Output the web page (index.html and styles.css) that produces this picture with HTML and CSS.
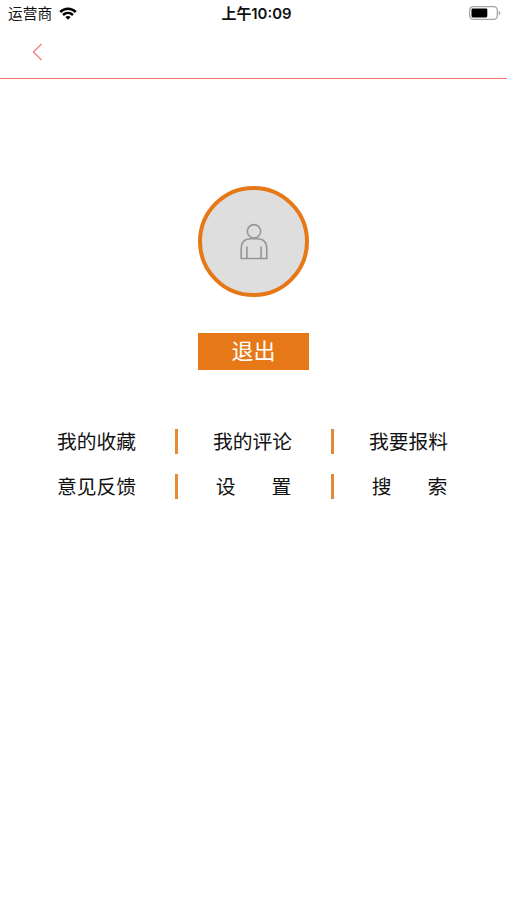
FILE: index.html
```html
<!DOCTYPE html>
<html lang="zh-CN">
<head>
<meta charset="utf-8">
<meta name="viewport" content="width=device-width, initial-scale=1">
<title>我的</title>
<link rel="stylesheet" href="styles.css">
</head>
<body>
<div class="status">
  <div class="carrier"><span>运营商</span>
    <svg class="wifi" width="18" height="13" viewBox="0 0 18 13" fill="none" stroke="#000" stroke-width="2.5"><path d="M1.2 5C5.7.7 12.3.7 16.8 5M4 8C6.9 5.3 11.1 5.3 14 8"/><path d="M9 12.8 6.3 10.1Q9 7.9 11.7 10.1Z" fill="#000" stroke="none"/></svg>
  </div>
  <time class="clock">上午10:09</time>
  <svg class="battery" width="32" height="14" viewBox="0 0 32 14"><rect x=".7" y=".7" width="27.6" height="12.6" rx="3.6" fill="#fff" stroke="#a6a6a6" stroke-width="1.3"/><rect x="2.5" y="2.5" width="15.8" height="9" rx="1.4"/><path d="M29.7 4.7Q31.3 5.3 31.3 7T29.7 9.3Z" fill="#a6a6a6"/></svg>
</div>
<header class="nav">
  <svg class="back" width="12" height="18" viewBox="0 0 12 18" fill="none" stroke="#f08080" stroke-width="1.3"><path d="M9.5 1 1.4 9l8.1 8"/></svg>
</header>
<main>
  <div class="avatar">
    <svg width="30" height="38" viewBox="0 0 30 38" fill="none" stroke="#969696" stroke-width="1.6"><circle cx="15" cy="8.3" r="6.7"/><path d="M2.2 35.5V26Q2.2 15.8 12 15.8H18Q27.8 15.8 27.8 26V35.5ZM7.9 35.5V23.5M22.1 35.5V23.5"/></svg>
  </div>
  <button class="logout">退出</button>
  <nav class="menu">
    <a class="item">我的收藏</a><a class="item">我的评论</a><a class="item">我要报料</a>
    <a class="item">意见反馈</a><a class="item spaced"><span>设</span><span>置</span></a><a class="item spaced"><span>搜</span><span>索</span></a>
  </nav>
</main>
</body>
</html>
```
FILE: styles.css
```css
* { box-sizing: border-box; }
body {
  margin: 0;
  min-height: 900px;
  background: #fff;
  color: #111;
  font-family: "Inter", "Noto Sans CJK SC", sans-serif;
}
.status {
  display: grid;
  grid-template-columns: 1fr auto 1fr;
  align-items: center;
  height: 26px;
  padding: 0 6px 0 8px;
}
.carrier { display: flex; align-items: center; gap: 7px; font-size: 14.7px; line-height: 24px; }
.carrier span { padding-top: 2px; }
.clock { font-size: 14.9px; font-weight: 600; line-height: 24px; padding: 2px 0 0 4px; }
.battery { justify-self: end; }
.nav {
  display: flex;
  align-items: center;
  height: 53px;
  padding-left: 32px;
  border-bottom: 1.5px solid #f07070;
}
main { display: flex; flex-direction: column; align-items: center; }
.avatar {
  display: flex;
  align-items: center;
  justify-content: center;
  width: 111px;
  height: 111px;
  margin-top: 106.5px;
  padding-top: 1px;
  border: 4px solid #e67817;
  border-radius: 50%;
  background: #dedede;
}
.logout {
  width: 111px;
  height: 37px;
  margin-top: 36px;
  padding: 0 0 5px;
  border: 0;
  background: #e67817;
  color: #fff;
  font: 400 22px/32px "Noto Sans CJK SC", sans-serif;
}
.menu {
  display: grid;
  grid-template-columns: repeat(3, 156px);
  row-gap: 20px;
  margin: 59px 2px 0 0;
}
.item {
  display: flex;
  justify-content: center;
  align-items: center;
  height: 25px;
  padding-top: 2px;
  font-size: 19.8px;
  line-height: 25px;
}
.item:not(:nth-child(3n + 1)) { border-left: 3px solid #e28a35; padding-right: 3px; }
.item.spaced { gap: 36px; padding-right: 1px; }
```
